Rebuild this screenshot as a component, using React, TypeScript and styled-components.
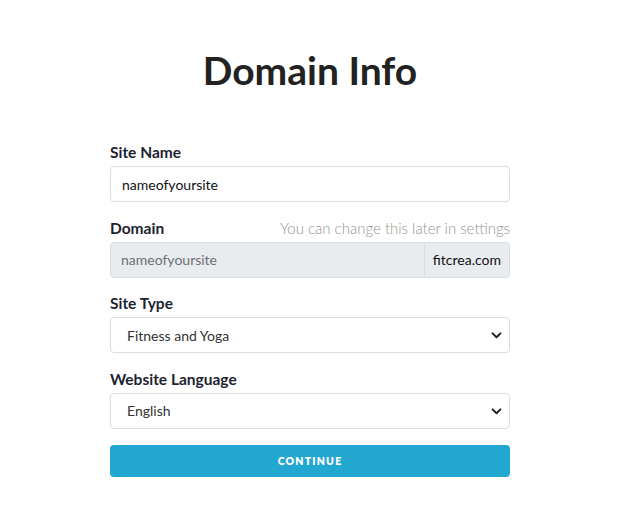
import { createGlobalStyle, styled } from 'styled-components';

const GlobalStyle = createGlobalStyle`
  html, body {
    margin: 0;
    padding: 0;
    background: #ffffff;
  }
  body {
    font-family: Lato, "Noto Sans", sans-serif;
    color: #212529;
  }
  * {
    box-sizing: border-box;
  }
`;

function Chevron() {
  return (
    <S.ChevronIcon viewBox="0 0 12 8" width="11" height="7">
      <path
        d="M1.5 1.5 L6 6 L10.5 1.5"
        fill="none"
        stroke="#222"
        strokeWidth="2.2"
        strokeLinecap="round"
        strokeLinejoin="round"
      />
    </S.ChevronIcon>
  );
}

export default function App() {
  return (
    <S.Page>
      <GlobalStyle />
      <S.Title>Domain Info</S.Title>
      <S.Form onSubmit={(e) => e.preventDefault()}>
        <S.Field>
          <S.LabelRow>
            <S.Label>Site Name</S.Label>
          </S.LabelRow>
          <S.Input defaultValue="nameofyoursite" />
        </S.Field>

        <S.Field>
          <S.LabelRow>
            <S.Label>Domain</S.Label>
            <S.Hint>You can change this later in settings</S.Hint>
          </S.LabelRow>
          <S.InputGroup>
            <S.GroupInput placeholder="nameofyoursite" disabled />
            <S.Addon>fitcrea.com</S.Addon>
          </S.InputGroup>
        </S.Field>

        <S.Field>
          <S.LabelRow>
            <S.Label>Site Type</S.Label>
          </S.LabelRow>
          <S.SelectWrap>
            <S.Select defaultValue="fitness">
              <option value="fitness">Fitness and Yoga</option>
              <option value="other">Other</option>
            </S.Select>
            <Chevron />
          </S.SelectWrap>
        </S.Field>

        <S.Field>
          <S.LabelRow>
            <S.Label>Website Language</S.Label>
          </S.LabelRow>
          <S.SelectWrap>
            <S.Select defaultValue="en">
              <option value="en">English</option>
              <option value="fr">Français</option>
            </S.Select>
            <Chevron />
          </S.SelectWrap>
        </S.Field>

        <S.Button type="submit">Continue</S.Button>
      </S.Form>
    </S.Page>
  );
}

const S = {
  Page: styled.div`
    width: 620px;
    min-height: 514px;
    display: flex;
    flex-direction: column;
    align-items: center;
    padding-top: 46px;
  `,
  Title: styled.h1`
    margin: 0 0 48px;
    font-size: 39px;
    line-height: 48px;
    font-weight: 700;
    color: #222222;
  `,
  Form: styled.form`
    width: 400px;
    display: flex;
    flex-direction: column;
    gap: 15.5px;
  `,
  Field: styled.div`
    display: flex;
    flex-direction: column;
    gap: 4px;
  `,
  LabelRow: styled.div`
    display: flex;
    justify-content: space-between;
    align-items: baseline;
    line-height: 20px;
  `,
  Label: styled.label`
    font-size: 15.5px;
    font-weight: 700;
    color: #1c2430;
  `,
  Hint: styled.span`
    font-size: 15px;
    font-weight: 300;
    color: #949494;
  `,
  Input: styled.input`
    height: 36px;
    width: 100%;
    padding: 0 11px;
    font-family: inherit;
    font-size: 14px;
    color: #111;
    border: 1px solid #dadde0;
    border-radius: 4px;
    outline: none;
  `,
  InputGroup: styled.div`
    display: flex;
    height: 36px;
    border: 1px solid #dadde0;
    border-radius: 4px;
    background: #e9ecef;
    overflow: hidden;
  `,
  GroupInput: styled.input`
    flex: 1;
    min-width: 0;
    padding: 0 10px;
    border: none;
    background: transparent;
    font-family: inherit;
    font-size: 14px;
    &::placeholder {
      color: #6c6f73;
    }
  `,
  Addon: styled.span`
    display: flex;
    align-items: center;
    padding: 0 8px;
    border-left: 1px solid #dadde0;
    font-size: 14px;
    color: #111;
  `,
  SelectWrap: styled.div`
    position: relative;
  `,
  Select: styled.select`
    appearance: none;
    width: 100%;
    height: 36px;
    padding: 0 30px 0 16px;
    font-family: inherit;
    font-size: 14px;
    color: #333;
    background: #fff;
    border: 1px solid #dadde0;
    border-radius: 4px;
    outline: none;
  `,
  ChevronIcon: styled.svg`
    position: absolute;
    right: 8px;
    top: 15px;
    pointer-events: none;
  `,
  Button: styled.button`
    height: 32px;
    margin-top: 1px;
    border: none;
    border-radius: 4px;
    background: #21a7d0;
    color: #fff;
    font-family: inherit;
    font-size: 10.5px;
    font-weight: 800;
    letter-spacing: 1.2px;
    text-transform: uppercase;
    cursor: pointer;
  `,
};
